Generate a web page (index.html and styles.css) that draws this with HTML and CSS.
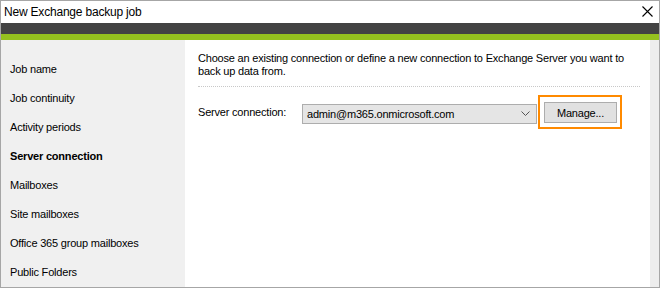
FILE: index.html
```html
<!DOCTYPE html>
<html>
<head>
    <title>New Exchange backup job</title>
    <link rel="stylesheet" href="styles.css">
</head>
<body>
    <div class="window">
        <div class="titlebar">
            <span class="title">New Exchange backup job</span>
            <svg class="close" width="11" height="11" viewBox="0 0 11 11">
                <path d="M0.5 0.5 L10.5 10.5 M10.5 0.5 L0.5 10.5" stroke="#000" stroke-width="1.1" fill="none"/>
            </svg>
        </div>
        <div class="header-dark"></div>
        <div class="header-green"></div>
        <div class="main">
            <ul class="steps">
                <li>Job name</li>
                <li>Job continuity</li>
                <li>Activity periods</li>
                <li class="current">Server connection</li>
                <li>Mailboxes</li>
                <li>Site mailboxes</li>
                <li>Office 365 group mailboxes</li>
                <li>Public Folders</li>
            </ul>
            <div class="content">
                <p class="intro">Choose an existing connection or define a new connection to Exchange Server you want to back up data from.</p>
                <div class="row">
                    <label class="row-label">Server connection:</label>
                    <div class="combo">
                        <span>admin@m365.onmicrosoft.com</span>
                        <svg width="9" height="5" viewBox="0 0 9 5">
                            <path d="M0.5 0.5 L4.5 4.5 L8.5 0.5" stroke="#555" fill="none"/>
                        </svg>
                    </div>
                    <div class="highlight">
                        <button class="btn">Manage...</button>
                    </div>
                </div>
            </div>
            <div class="scroll"></div>
        </div>
    </div>
</body>
</html>
```

FILE: styles.css
```css
body {
    margin: 0;
    padding: 0;
    background: #fff;
    font-family: "Liberation Sans", Arial, sans-serif;
    font-size: 11px;
    letter-spacing: -0.2px;
    color: #000;
}

.window {
    width: 660px;
    height: 288px;
    box-sizing: border-box;
    border: 1px solid #a6a6a6;
    display: flex;
    flex-direction: column;
    overflow: hidden;
}

.titlebar {
    height: 23px;
    display: flex;
    align-items: center;
    justify-content: space-between;
    padding: 0 6px 0 3px;
    background: #fff;
}

.title {
    font-size: 12px;
    letter-spacing: -0.2px;
}

.close {
    margin-top: -1px;
}

.header-dark {
    height: 12px;
    background: #434343;
}

.header-green {
    height: 6px;
    background: #95c11f;
}

.main {
    flex: 1;
    display: flex;
}

.steps {
    list-style: none;
    margin: 0;
    padding: 15px 0 0 9px;
    width: 175px;
    background: #f0f0f0;
}

.steps li {
    height: 29px;
    line-height: 29px;
    white-space: nowrap;
}

.steps li.current {
    font-weight: bold;
}

.content {
    flex: 1;
    padding: 12px 10px 0 13px;
}

.intro {
    margin: 0;
    line-height: 13px;
    padding-right: 8px;
    padding-bottom: 8px;
    border-bottom: 1px dotted #c8c8c8;
}

.row {
    display: flex;
    align-items: center;
    margin-top: 8px;
}

.row-label {
    width: 104px;
}

.combo {
    width: 224px;
    height: 18px;
    border: 1px solid #adadad;
    background: #e5e5e5;
    display: flex;
    align-items: center;
    justify-content: space-between;
    padding: 0 6px 0 3px;
    margin-top: 3px;
}

.combo span {
    margin-left: 1px;
}

.highlight {
    margin-left: 1px;
    border: 2px solid #ff8a00;
    padding: 5px 3px 4px 4px;
}

.btn {
    width: 73px;
    height: 21px;
    border: 1px solid #adadad;
    background: #e1e1e1;
    font-family: "Liberation Sans", Arial, sans-serif;
    font-size: 11px;
    letter-spacing: -0.2px;
    color: #000;
    padding: 0;
}

.scroll {
    width: 9px;
    background: #ededed;
}
```
